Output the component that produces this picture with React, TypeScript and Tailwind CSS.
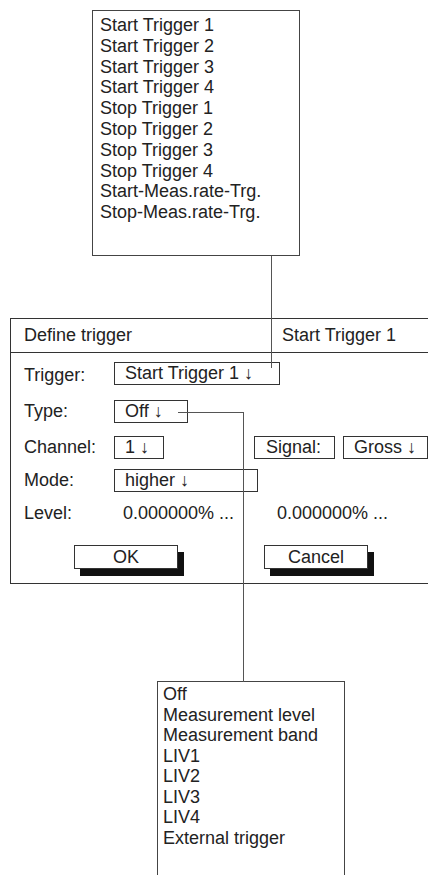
const triggers = [
  'Start Trigger 1',
  'Start Trigger 2',
  'Start Trigger 3',
  'Start Trigger 4',
  'Stop Trigger 1',
  'Stop Trigger 2',
  'Stop Trigger 3',
  'Stop Trigger 4',
  'Start-Meas.rate-Trg.',
  'Stop-Meas.rate-Trg.',
];

const types = [
  'Off',
  'Measurement level',
  'Measurement band',
  'LIV1',
  'LIV2',
  'LIV3',
  'LIV4',
  'External trigger',
];

function Field({ children, className = '' }: { children: React.ReactNode; className?: string }) {
  return (
    <div className={`h-[23px] border border-[#333] pl-[10px] flex items-center whitespace-nowrap ${className}`}>
      {children}
    </div>
  );
}

function Button({ label, className = '' }: { label: string; className?: string }) {
  return (
    <div
      className={`w-[104px] h-[24px] border border-[#333] bg-white flex items-center justify-center shadow-[6px_7px_0_#111] ${className}`}
    >
      {label}
    </div>
  );
}

export default function App() {
  return (
    <div className="relative w-[428px] h-[875px] overflow-hidden bg-white text-[18px] leading-[21px] text-[#222] font-['Liberation_Sans',Arial,sans-serif]">
      {/* trigger list */}
      <div className="ml-[92px] mt-[10px] w-[208px] h-[246px] border border-[#444] pl-[7px] pt-[4px] leading-[20.8px]">
        {triggers.map((t) => (
          <div key={t}>{t}</div>
        ))}
      </div>

      {/* dialog */}
      <div className="ml-[10px] mt-[62px] w-[430px] border-y border-l border-[#333]">
        <div className="h-[34px] border-b border-[#333] flex items-center">
          <div className="w-[260px] pl-[13px]">Define trigger</div>
          <div className="pl-[11px]">Start Trigger 1</div>
        </div>

        <div className="pl-[13px] pb-[14px]">
          <div className="mt-[9px] h-[23px] flex items-center">
            <div className="w-[90px] pt-[4px]">Trigger:</div>
            <Field className="w-[166px]">Start Trigger 1 ↓</Field>
          </div>
          <div className="mt-[15px] h-[23px] flex items-center">
            <div className="w-[90px]">Type:</div>
            <Field className="w-[74px]">Off ↓</Field>
          </div>
          <div className="mt-[13px] h-[23px] flex items-center">
            <div className="w-[90px]">Channel:</div>
            <Field className="w-[50px]">1 ↓</Field>
            <Field className="w-[81px] ml-[90px] pl-[11px]">Signal:</Field>
            <Field className="w-[85px] ml-[8px]">Gross ↓</Field>
          </div>
          <div className="mt-[10px] h-[23px] flex items-center">
            <div className="w-[90px]">Mode:</div>
            <Field className="w-[144px]">higher ↓</Field>
          </div>
          <div className="mt-[10px] h-[23px] flex items-center">
            <div className="w-[99px]">Level:</div>
            <div className="w-[154px]">0.000000% ...</div>
            <div>0.000000% ...</div>
          </div>
          <div className="mt-[20px] flex">
            <Button label="OK" className="ml-[50px]" />
            <Button label="Cancel" className="ml-[86px]" />
          </div>
        </div>
      </div>

      {/* type list */}
      <div className="ml-[157px] mt-[97px] w-[188px] h-[300px] border-t border-x border-[#444] pl-[5px] pt-[2px] leading-[20.5px]">
        {types.map((t) => (
          <div key={t}>{t}</div>
        ))}
      </div>

      {/* connector lines */}
      <div className="absolute left-[271px] top-[256px] w-px h-[112px] bg-[#555]" />
      <div className="absolute left-[178px] top-[412px] w-[66px] h-px bg-[#555]" />
      <div className="absolute left-[243px] top-[412px] w-px h-[270px] bg-[#555]" />
    </div>
  );
}
